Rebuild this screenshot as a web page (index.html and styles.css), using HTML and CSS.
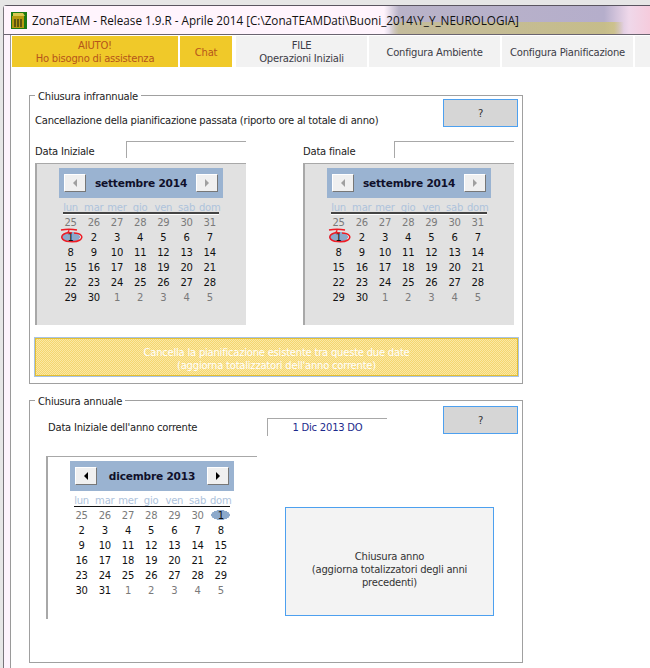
FILE: index.html
```html
<!DOCTYPE html>
<html lang="it">
<head>
<meta charset="utf-8">
<title>ZonaTEAM</title>
<link rel="stylesheet" href="styles.css">
</head>
<body>
<div class="window">
  <header class="titlebar">
    <svg class="appicon" width="16" height="17" viewBox="0 0 16 17"><rect width="16" height="17" fill="#1c7a12"/><rect x="1" y="4" width="12" height="12" fill="#b59a10"/><path d="M2 1h10l2 3H2z" fill="#d8c850"/><path d="M4 7v8M7 7v8M10 7v8" stroke="#3a3a10" stroke-width="1.4"/></svg>
    <span class="title">ZonaTEAM - Release 1.9.R - Aprile 2014 [C:\ZonaTEAMDati\Buoni_2014\Y_Y_NEUROLOGIA]</span>
  </header>
  <main class="client">
    <nav class="tabs">
      <div class="tab tab-help">AIUTO!<br>Ho bisogno di assistenza</div>
      <div class="tab tab-chat">Chat</div>
      <div class="tab tab-file">FILE<br>Operazioni Iniziali</div>
      <div class="tab tab-conf">Configura Ambiente</div>
      <div class="tab tab-conf">Configura Pianificazione</div>
      <div class="tab tab-rest"></div>
    </nav>

    <section class="group group-one">
      <h2 class="legend">Chiusura infrannuale</h2>
      <div class="intro">
        <p class="intro-text">Cancellazione della pianificazione passata (riporto ore al totale di anno)</p>
        <button class="help-btn">?</button>
      </div>
      <div class="pickers">
        <div class="picker">
          <div class="date-row"><span class="date-label">Data Iniziale</span><span class="date-field"></span></div>
          <div class="cal-panel">
            <div class="calendar">
              <div class="cal-head"><span class="nav-btn"><i class="arrow arrow-left dim"></i></span><b>settembre 2014</b><span class="nav-btn"><i class="arrow arrow-right dim"></i></span></div>
              <div class="cal-grid dows"><span>lun</span><span>mar</span><span>mer</span><span>gio</span><span>ven</span><span>sab</span><span>dom</span></div>
              <div class="cal-grid days">
                <span class="off">25</span><span class="off">26</span><span class="off">27</span><span class="off">28</span><span class="off">29</span><span class="off">30</span><span class="off">31</span>
                <span class="sel circled">1<svg class="scribble" width="24" height="15" viewBox="0 0 24 15"><path d="M1 2 C6 1 12 1 17 2 M9 2 L8 5 M12 5 C5 4 1 7 2 10 C3 14 15 15 20 12 C24 9 21 5 14 5" fill="none" stroke="#ee1c25" stroke-width="1.5"/></svg></span><span>2</span><span>3</span><span>4</span><span>5</span><span>6</span><span>7</span>
                <span>8</span><span>9</span><span>10</span><span>11</span><span>12</span><span>13</span><span>14</span>
                <span>15</span><span>16</span><span>17</span><span>18</span><span>19</span><span>20</span><span>21</span>
                <span>22</span><span>23</span><span>24</span><span>25</span><span>26</span><span>27</span><span>28</span>
                <span>29</span><span>30</span><span class="off">1</span><span class="off">2</span><span class="off">3</span><span class="off">4</span><span class="off">5</span>
              </div>
            </div>
          </div>
        </div>
        <div class="picker">
          <div class="date-row"><span class="date-label">Data finale</span><span class="date-field"></span></div>
          <div class="cal-panel">
            <div class="calendar">
              <div class="cal-head"><span class="nav-btn"><i class="arrow arrow-left dim"></i></span><b>settembre 2014</b><span class="nav-btn"><i class="arrow arrow-right dim"></i></span></div>
              <div class="cal-grid dows"><span>lun</span><span>mar</span><span>mer</span><span>gio</span><span>ven</span><span>sab</span><span>dom</span></div>
              <div class="cal-grid days">
                <span class="off">25</span><span class="off">26</span><span class="off">27</span><span class="off">28</span><span class="off">29</span><span class="off">30</span><span class="off">31</span>
                <span class="sel circled">1<svg class="scribble" width="24" height="15" viewBox="0 0 24 15"><path d="M1 2 C6 1 12 1 17 2 M9 2 L8 5 M12 5 C5 4 1 7 2 10 C3 14 15 15 20 12 C24 9 21 5 14 5" fill="none" stroke="#ee1c25" stroke-width="1.5"/></svg></span><span>2</span><span>3</span><span>4</span><span>5</span><span>6</span><span>7</span>
                <span>8</span><span>9</span><span>10</span><span>11</span><span>12</span><span>13</span><span>14</span>
                <span>15</span><span>16</span><span>17</span><span>18</span><span>19</span><span>20</span><span>21</span>
                <span>22</span><span>23</span><span>24</span><span>25</span><span>26</span><span>27</span><span>28</span>
                <span>29</span><span>30</span><span class="off">1</span><span class="off">2</span><span class="off">3</span><span class="off">4</span><span class="off">5</span>
              </div>
            </div>
          </div>
        </div>
      </div>
      <button class="delete-btn">Cancella la pianificazione esistente tra queste due date<br>(aggiorna totalizzatori dell'anno corrente)</button>
    </section>

    <section class="group group-two">
      <h2 class="legend">Chiusura annuale</h2>
      <div class="year-row">
        <span class="year-label">Data Iniziale dell'anno corrente</span>
        <span class="year-field">1 Dic 2013 DO</span>
        <button class="help-btn">?</button>
      </div>
      <div class="year-body">
        <div class="cal-panel cal-panel-white">
          <div class="calendar">
            <div class="cal-head"><span class="nav-btn"><i class="arrow arrow-left"></i></span><b>dicembre 2013</b><span class="nav-btn"><i class="arrow arrow-right"></i></span></div>
            <div class="cal-grid dows dows-dark"><span>lun</span><span>mar</span><span>mer</span><span>gio</span><span>ven</span><span>sab</span><span>dom</span></div>
            <div class="cal-grid days">
              <span class="off">25</span><span class="off">26</span><span class="off">27</span><span class="off">28</span><span class="off">29</span><span class="off">30</span><span class="sel">1</span>
              <span>2</span><span>3</span><span>4</span><span>5</span><span>6</span><span>7</span><span>8</span>
              <span>9</span><span>10</span><span>11</span><span>12</span><span>13</span><span>14</span><span>15</span>
              <span>16</span><span>17</span><span>18</span><span>19</span><span>20</span><span>21</span><span>22</span>
              <span>23</span><span>24</span><span>25</span><span>26</span><span>27</span><span>28</span><span>29</span>
              <span>30</span><span>31</span><span class="off">1</span><span class="off">2</span><span class="off">3</span><span class="off">4</span><span class="off">5</span>
            </div>
          </div>
        </div>
        <button class="close-btn">Chiusura anno<br>(aggiorna totalizzatori degli anni precedenti)</button>
      </div>
    </section>
  </main>
</div>
</body>
</html>
```
FILE: styles.css
```css
* { box-sizing: border-box; }
html, body { margin: 0; padding: 0; }
body {
  width: 650px;
  height: 668px;
  overflow: hidden;
  background: #e6e6e6;
  font-family: "DejaVu Sans", sans-serif;
  font-size: 10px;
  letter-spacing: -.22px;
  color: #222;
}
button { font-family: inherit; font-size: inherit; letter-spacing: inherit; padding: 0; cursor: default; }

.window {
  height: 663px;
  margin: 5px 0 0 3px;
  border-top: 1px solid #5a5560;
  border-left: 1px solid #77747a;
  border-top-left-radius: 4px;
  padding-left: 6px;
  background: #fdf3fc;
}
.titlebar {
  height: 29px;
  margin-left: -6px;
  padding-left: 6px;
  display: flex;
  align-items: center;
  gap: 5px;
  background:
    linear-gradient(to right, rgba(255,255,255,0) 0, rgba(255,255,255,0) 385px, rgba(205,195,120,.55) 395px, rgba(205,195,110,.7) 610px, rgba(255,255,255,0) 620px) 0 16px / 100% 12px no-repeat,
    linear-gradient(to right, #fff4fd 0, #fff4fd 380px, #b9b3c8 395px, #b5aecb 600px, #efd8ea 625px, #f7c9da 650px);
  border-bottom: 1px solid #6a6470;
}
.appicon { margin-left: 1px; flex: none; }
.title { font-family: "Open Sans", sans-serif; font-size: 11.7px; letter-spacing: 0; color: #111; white-space: nowrap; }

.client {
  height: 633px;
  border-left: 1px solid #9a9a9a;
  background: #fff;
  padding: 1px 0 0 1px;
}

.tabs { display: flex; height: 31px; gap: 2px; }
.tab {
  flex: none;
  display: flex;
  align-items: center;
  justify-content: center;
  text-align: center;
  line-height: 13px;
  padding-top: 1px;
  background: #f2f2f2;
  color: #3c3c46;
}
.tab-help { width: 166px; background: #f0c929; color: #b5551b; }
.tab-chat { width: 52px; background: #f0c929; color: #b5551b; margin-right: 2px; }
.tab-file { width: 131px; }
.tab-conf { width: 131px; }
.tab-rest { width: 30px; }

.group {
  position: relative;
  width: 494px;
  margin-left: 17px;
  border: 1px solid #a0a0a0;
}
.group-one { height: 289px; margin-top: 28px; padding: 4px 4px 0 5px; }
.group-two { height: 263px; margin-top: 16px; padding: 5px 4px 0 5px; }
.legend {
  position: absolute;
  top: -6px;
  left: 5px;
  margin: 0;
  padding: 0 3px;
  background: #fff;
  font-weight: normal;
  font-size: 10px;
  line-height: 13px;
  color: #222;
}

.intro { display: flex; justify-content: space-between; align-items: flex-end; height: 27px; }
.intro-text { margin: 0; line-height: 13px; }
.help-btn {
  width: 75px;
  height: 28px;
  border: 1px solid #4da0ef;
  background: #d6d6d6;
  color: #333;
  flex: none;
}
.pickers { display: flex; gap: 57px; margin-top: 14px; }
.picker { width: 211px; }
.date-row { display: flex; height: 17px; margin-bottom: 5px; }
.date-label { width: 91px; line-height: 22px; }
.date-field {
  width: 120px;
  border-top: 1px solid #a8a8a8;
  border-left: 1px solid #a8a8a8;
}

.cal-panel {
  width: 211px;
  height: 162px;
  background: #e1e1e1;
  border-top: 1px solid #a8a8a8;
  border-left: 2px solid #a8a8a8;
  padding: 4px 0 0 22px;
}
.cal-panel-white { background: #fff; height: 163px; flex: none; }
.calendar { width: 164px; }
.cal-head {
  height: 30px;
  background: #9ab3d1;
  display: flex;
  align-items: center;
  justify-content: space-between;
  padding: 0 5px;
  color: #10102a;
  font-size: 10.6px;
}
.cal-head b { font-weight: 700; letter-spacing: -.2px; }
.nav-btn {
  width: 22px;
  height: 18px;
  background: #f0f0f0;
  border: 1px solid #fff;
  border-right-color: #777;
  border-bottom-color: #777;
  display: flex;
  align-items: center;
  justify-content: center;
}
.arrow { width: 0; height: 0; border-top: 4px solid transparent; border-bottom: 4px solid transparent; }
.arrow-left { border-right: 4px solid #000; }
.arrow-right { border-left: 4px solid #000; }
.arrow-left.dim { border-right-color: #a0a0a0; }
.arrow-right.dim { border-left-color: #a0a0a0; }

.cal-grid {
  display: grid;
  grid-template-columns: repeat(7, 23.2px);
  text-align: center;
}
.dows {
  height: 17px;
  width: 164px;
  color: #aec3dc;
  line-height: 19px;
  position: relative;
}
.dows::after {
  content: "";
  position: absolute;
  left: 4px;
  width: 156px;
  bottom: 0;
  height: 2px;
  background: #444;
  border-bottom: 1px solid #fff;
}
.dows-dark { height: 16px; }
.dows-dark::after { background: #111; height: 1px; border: 0; }
.days { grid-auto-rows: 15px; line-height: 17px; color: #111; margin-top: -1px; }
.dows-dark + .days { margin-top: 0; }
.days .off { color: #7a7a7a; }
.sel {
  position: relative;
  background: radial-gradient(closest-side, #8ca9cb 97%, rgba(140,169,203,0)) center / 19px 10px no-repeat;
}
.scribble { position: absolute; left: 1px; top: -1px; }

.delete-btn {
  display: block;
  width: 483px;
  height: 38px;
  margin-top: 13px;
  border: 1px solid #e3bf33;
  outline: 1px solid #a9c4e4;
  background: repeating-conic-gradient(#fbe9a6 0 25%, #f5d66f 0 50%) 0 0 / 2px 2px;
  color: #fff;
  line-height: 13px;
  padding-top: 3px;
  text-align: center;
}

.year-row { display: flex; align-items: flex-start; height: 29px; }
.year-label { width: 219px; margin-left: 13px; margin-top: 15px; line-height: 13px; }
.year-field {
  width: 120px;
  height: 18px;
  margin-top: 12px;
  border-top: 1px solid #a8a8a8;
  border-left: 1px solid #a8a8a8;
  color: #1c2a8c;
  text-align: center;
  line-height: 18px;
}
.year-row .help-btn { margin-left: 56px; }

.year-body { display: flex; align-items: flex-start; margin-top: 21px; margin-left: 11px; }
.close-btn {
  width: 209px;
  height: 109px;
  margin: 51px 0 0 28px;
  border: 1px solid #4da0ef;
  background: #f3f3f3;
  color: #333;
  line-height: 13px;
  padding: 16px 18px 0;
  text-align: center;
  flex: none;
}
```
